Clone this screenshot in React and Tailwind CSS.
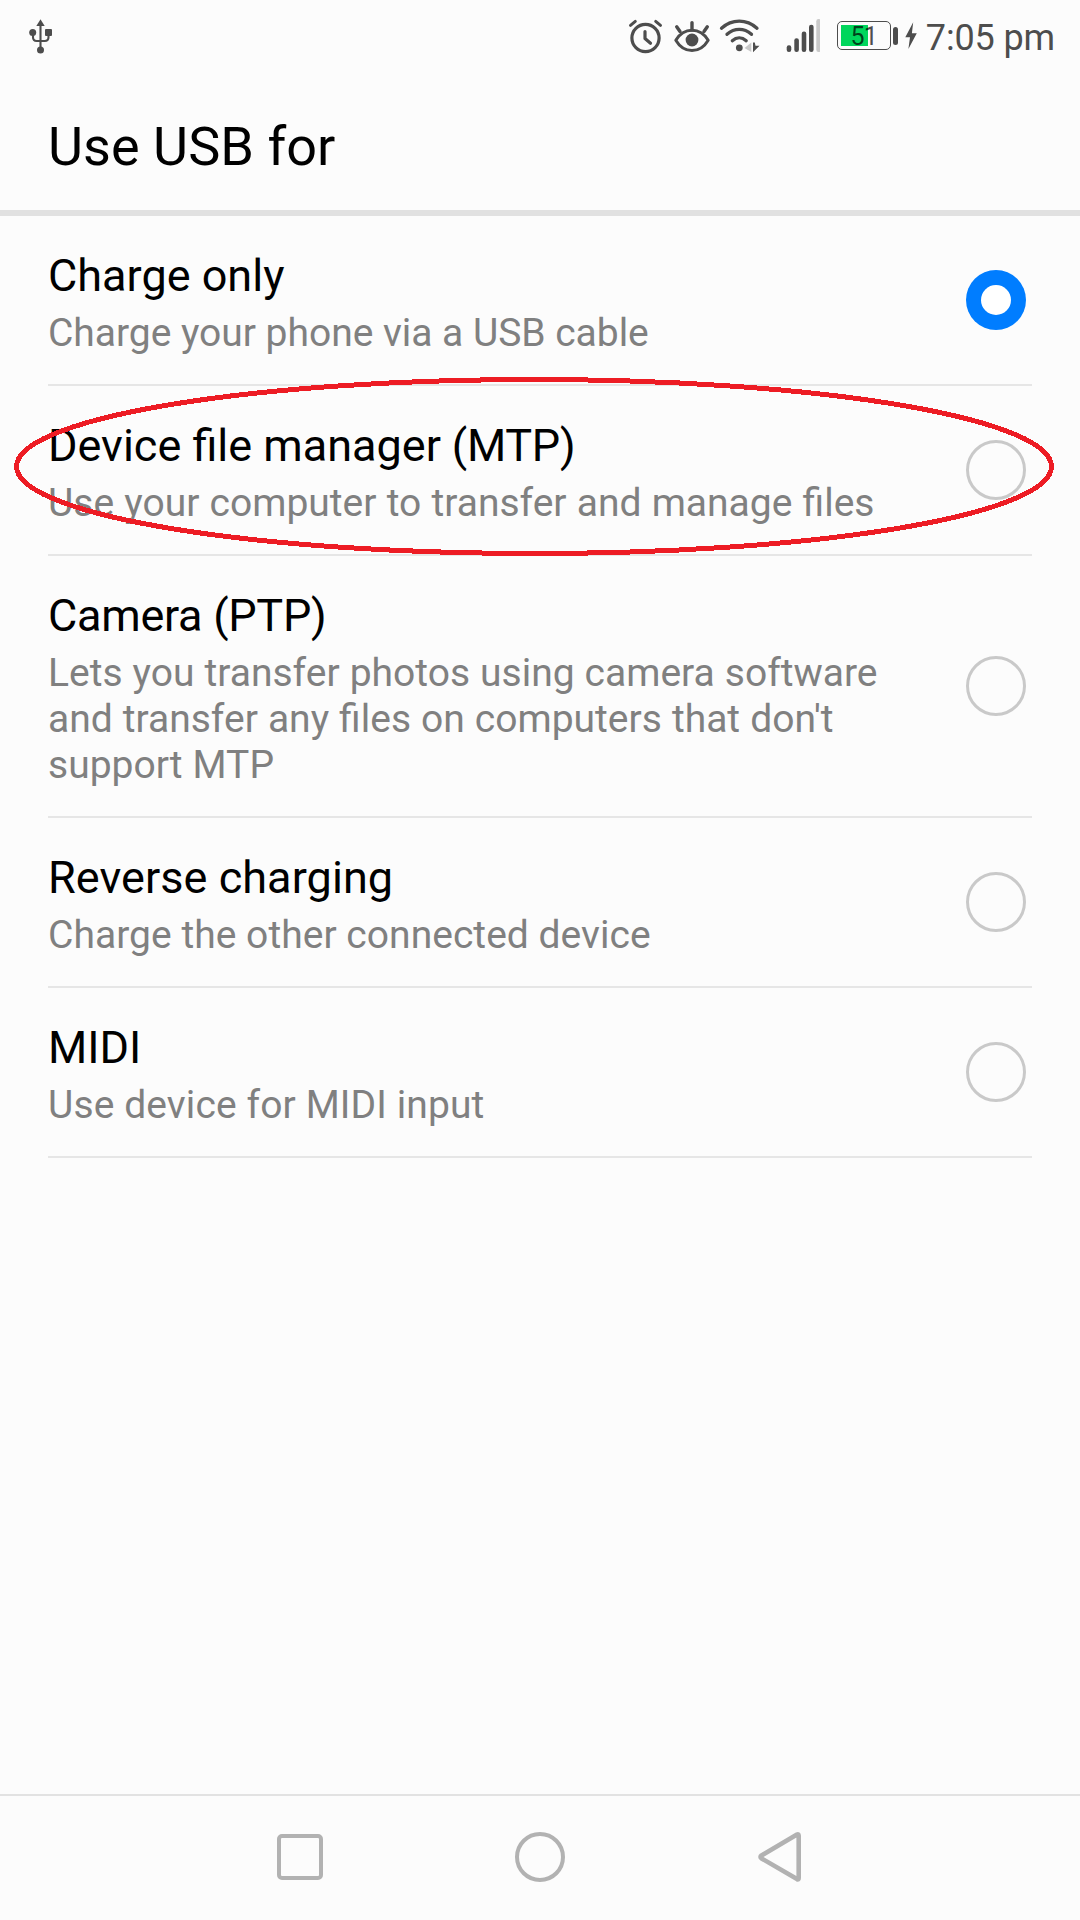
const OPTIONS = [
  { title: "Charge only", text: "Charge your phone via a USB cable", textClass: "tracking-[-0.03px]", checked: true },
  {
    title: "Device file manager",
    suffix: "(MTP)",
    text: "Use your computer to transfer and manage files",
    textClass: "[word-spacing:0.5px]",
    marked: true,
  },
  {
    title: "Camera (PTP)",
    titleClass: "tracking-[-0.28px]",
    text: "Lets you transfer photos using camera software and transfer any files on computers that don't support MTP",
    textClass: "[word-spacing:0.35px]",
  },
  { title: "Reverse charging", titleClass: "tracking-[0.06px]", text: "Charge the other connected device", textClass: "tracking-[0.03px]" },
  { title: "MIDI", text: "Use device for MIDI input", textClass: "tracking-[0.11px]" },
];

function UsbIcon() {
  return (
    <svg className="ml-7 h-[36px] w-[26px]" viewBox="28 18 26 36" fill="#4d4d4d">
      <path d="M40.5 19.3 44.7 26H36.3Z" />
      <path d="M40.5 25V48M33 35V37.3Q33 41 36.7 41H44.8Q48.5 41 48.5 37.3V35" fill="none" stroke="#4d4d4d" strokeWidth="2.1" />
      <circle cx="40.5" cy="50" r="3.5" />
      <circle cx="32.7" cy="32.5" r="3.5" />
      <rect x="45" y="29" width="7" height="7" rx="1" />
    </svg>
  );
}

function AlarmIcon() {
  return (
    <svg className="h-9 w-[36px]" viewBox="628 18 36 36" fill="none" stroke="#4d4d4d" strokeLinecap="round" strokeLinejoin="round">
      <circle cx="645.5" cy="38" r="13.6" strokeWidth="3.2" />
      <path d="M645 31.5V38.5L650.5 43.2" strokeWidth="3.2" />
      <path d="M630.5 25.3 635.3 21.4M660.5 25.3 655.7 21.4" strokeWidth="3" />
    </svg>
  );
}

function EyeIcon() {
  return (
    <svg className="ml-2 h-9 w-[38px]" viewBox="672 18 38 36" fill="none" stroke="#4d4d4d" strokeLinecap="round" strokeLinejoin="round">
      <path d="M675.8 40.2C680 33.5 686 30.3 692 30.3S704 33.5 708.2 40.2C704 47.3 698 50.5 692 50.5S680 47.3 675.8 40.2Z" strokeWidth="3" />
      <circle cx="692" cy="40" r="6.4" fill="#4d4d4d" stroke="none" />
      <path d="M692 22.6V30M676.7 26.8 680 31.5M707.3 26.8 704 31.5" strokeWidth="3.4" />
    </svg>
  );
}

function WifiIcon() {
  return (
    <svg className="ml-2 h-9 w-[44px]" viewBox="718 18 44 36" fill="none" stroke="#4d4d4d" strokeLinecap="round">
      <path d="M721.5 28.2C732 18.8 746.5 18.8 757 28.2" strokeWidth="3.3" />
      <path d="M727 34.3C734.5 27.8 744 27.8 751.5 34.3" strokeWidth="3.3" />
      <path d="M732.3 40.7C736.5 37 742 37 746.2 40.7" strokeWidth="3.3" />
      <circle cx="739.3" cy="47.8" r="3.4" fill="#4d4d4d" stroke="none" />
      <path d="M744.5 48 751.3 42.5V52Z" fill="#c9c9c9" stroke="none" />
      <path d="M753 42.5V52.3L759.5 45.8H755.5L754.8 42.5Z" fill="#4d4d4d" stroke="none" />
    </svg>
  );
}

function SignalIcon() {
  return (
    <svg className="ml-[22px] h-9 w-9" viewBox="784 18 36 36" fill="#4d4d4d">
      <rect x="786.7" y="45.3" width="4.6" height="6.7" rx="2.2" />
      <rect x="794.3" y="38.3" width="4.6" height="13.7" rx="2.2" />
      <rect x="801.7" y="31.5" width="4.6" height="20.5" rx="2.2" />
      <rect x="809" y="24.7" width="4.6" height="27.3" rx="2.2" />
      <rect x="816.3" y="19" width="4.6" height="33" rx="2.2" fill="#c9c9c9" />
    </svg>
  );
}

function Battery() {
  return (
    <div className="-mt-px ml-[17px] flex items-center">
      <div className="relative flex h-[29px] w-[54px] items-center rounded-[5px] border-[1.5px] border-[#4d4d4d] pl-[3px]">
        <div className="h-[21px] w-[27px] bg-[#00d65c]" />
        <span className="absolute inset-0 flex items-center justify-center pt-px text-[25px] leading-none tracking-[-0.7px] text-black/70">51</span>
      </div>
      <div className="ml-[2px] h-[18px] w-[5px] rounded-full bg-[#4d4d4d]" />
      <svg className="ml-[7px] h-7 w-3" viewBox="905 22 12 28" fill="#4d4d4d">
        <path d="M913.2 22.3 905.3 37.3H910L908.4 49 916.8 33.3H911.9Z" />
      </svg>
    </div>
  );
}

function Row({ option }) {
  return (
    <li className="relative flex items-center justify-between border-b-2 border-[#e6e6e6]">
      <div className="w-[850px] pt-[33px] pb-7">
        <h2 className={`text-[45px] leading-[53px] text-black ${option.titleClass ?? ""}`}>
          {option.title}
          {option.suffix && <span className="tracking-[-0.3px]"> {option.suffix}</span>}
        </h2>
        <p className={`mt-2 text-[39px] leading-[46px] text-[#808080] ${option.textClass ?? ""}`}>{option.text}</p>
      </div>
      {option.checked ? (
        <div className="mr-1.5 flex size-[60px] items-center justify-center rounded-full bg-[#007dff]">
          <div className="size-[30px] rounded-full bg-white" />
        </div>
      ) : (
        <div className="mr-1.5 size-[60px] rounded-full border-3 border-[#c9c9c9]" />
      )}
      {option.marked && (
        <svg className="absolute -top-[9px] -left-[34px] z-10 h-[179px] w-[1040px]" viewBox="0 0 1040 179" shapeRendering="crispEdges">
          <ellipse cx="520" cy="89.5" rx="517.5" ry="87" fill="none" stroke="#ed1c24" strokeWidth="5" />
        </svg>
      )}
    </li>
  );
}

function NavBar() {
  return (
    <nav className="flex h-[126px] items-center justify-center border-t-2 border-[#e2e2e2] pb-[2px]">
      <div className="flex w-[240px] justify-center">
        <div className="size-[46px] rounded-[5px] border-[4.6px] border-[#b2b2b2]" />
      </div>
      <div className="flex w-[240px] justify-center">
        <div className="size-[50px] rounded-full border-[4.6px] border-[#b2b2b2]" />
      </div>
      <div className="flex w-[240px] justify-center">
        <svg className="size-[52px]" viewBox="754 1831 52 52">
          <path d="M797 1834.6Q798.7 1833.7 798.7 1835.7V1878Q798.7 1880 797 1879.1L761.5 1858.4Q759.5 1857 761.5 1855.4Z" fill="none" stroke="#b2b2b2" strokeWidth="4.6" strokeLinejoin="round" />
        </svg>
      </div>
    </nav>
  );
}

export default function App() {
  return (
    <div className="flex h-[1920px] w-[1080px] flex-col overflow-hidden bg-[#fcfcfc] font-['Roboto',sans-serif]">
      <header className="flex h-[72px] items-center justify-between">
        <UsbIcon />
        <div className="flex items-center pr-[25px]">
          <AlarmIcon />
          <EyeIcon />
          <WifiIcon />
          <SignalIcon />
          <Battery />
          <span className="ml-[9px] pt-[3px] text-[36px] leading-[42px] tracking-[-0.14px] whitespace-nowrap text-[#4d4d4d]">7:05 pm</span>
        </div>
      </header>
      <div className="flex h-36 items-center border-b-6 border-[#e1e1e1] pt-2.5 pl-12">
        <h1 className="text-[54px] leading-[63px] tracking-[0.05px] text-black">Use USB for</h1>
      </div>
      <ul className="flex-1 px-12">
        {OPTIONS.map((o) => (
          <Row key={o.title} option={o} />
        ))}
      </ul>
      <NavBar />
    </div>
  );
}
